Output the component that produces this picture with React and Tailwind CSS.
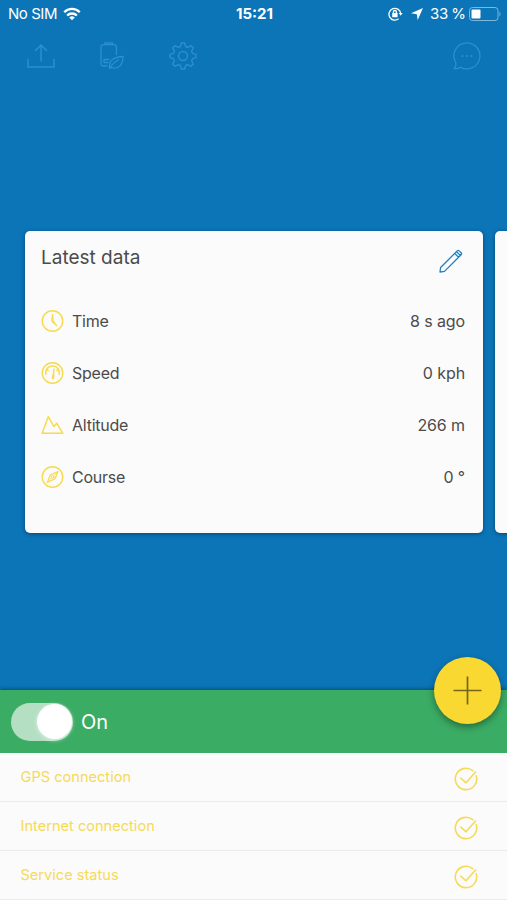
const line = { fill: "none", stroke: "currentColor", strokeLinecap: "round", strokeLinejoin: "round" };

function WifiIcon() {
  return (
    <svg className="ml-[6px] h-[14px] w-[18px]" viewBox="0 0 18 14" fill="none" stroke="white" strokeWidth="2.3">
      <path d="M1.2 5.2a11 11 0 0 1 15.6 0" />
      <path d="M4.1 8.5a7 7 0 0 1 9.8 0" />
      <path d="M9 13.2 6.2 10.5a4 4 0 0 1 5.6 0Z" fill="white" stroke="none" />
    </svg>
  );
}

function LockIcon() {
  return (
    <svg className="h-[14px] w-[15px]" viewBox="0 0 15 14" fill="none" stroke="white" strokeWidth="1.3">
      <path d="M10.6 11.8A5.9 5.9 0 1 1 12.7 6.3" />
      <path d="M10.8 6h3.8l-1.9 2.8Z" fill="white" stroke="none" />
      <rect x="4.2" y="6" width="5.4" height="4.2" rx=".4" fill="white" stroke="none" />
      <path d="M5.4 6.500V5a1.500 1.500 0 0 1 3 0v1.500" />
    </svg>
  );
}

function UploadIcon() {
  return (
    <svg className="h-7 w-7" viewBox="0 0 28 28" {...line} strokeWidth="1.500">
      <path d="M14 19V3M8.500 8.500 14 3l5.500 5.500M1 17.500V25h26v-7.500" />
    </svg>
  );
}

function EcoBatteryIcon() {
  return (
    <svg className="h-7 w-7" viewBox="0 0 28 28" {...line} strokeWidth="1.300">
      <path d="M9 24H5.500Q3 24 3 21.500V5Q3 2.700 5.500 2.700H16Q18.500 2.700 18.500 5V12.500M7 2.500V1h7.500v1.500M6 17.500h5M6 20.500h4M6 17.500v3" />
      <path d="M11.500 26.500C10.500 18 16 15 25 14.500C25 23 20 28 13.500 25.500ZM11.500 26.500Q15 20.500 20.500 18" />
    </svg>
  );
}

function GearIcon() {
  return (
    <svg className="h-7 w-7" viewBox="0 0 28 28" {...line} strokeWidth="1.400">
      <path d="M12.400 1h3.200l1.100 3.500 2 .9 3.300-1.700 2.300 2.300-1.700 3.300.9 2 3.500 1.100v3.200l-3.500 1.100-.9 2 1.700 3.300-2.300 2.300-3.300-1.700-2 .9-1.100 3.500h-3.200l-1.100-3.500-2-.9L6 24.300 3.700 22l1.700-3.300-.9-2L1 15.600v-3.200l3.500-1.100.9-2L3.700 6 6 3.700l3.300 1.700 2-.9Z" />
      <circle cx="14" cy="14" r="4.500" />
    </svg>
  );
}

function ChatIcon() {
  return (
    <svg className="h-7 w-7" viewBox="0 0 28 28" {...line} strokeWidth="1.300">
      <path d="M2.700 20.500A13 13 0 1 1 7.500 25.200Q5 27.200 1.200 26.700Q3.500 24 2.700 20.500Z" />
      <g fill="currentColor" stroke="none"><circle cx="9.500" cy="14" r="1.100" /><circle cx="14" cy="14" r="1.100" /><circle cx="18.500" cy="14" r="1.100" /></g>
    </svg>
  );
}

function PencilIcon() {
  return (
    <svg className="mb-[4px] h-6 w-6 text-[#2181c4]" viewBox="0 0 24 24" {...line} strokeWidth="1.300">
      <path d="M1 23 1.600 18.500 18.200 1.900q1-1 2 0l1.900 1.900q1 1 0 2L5.500 22.400ZM15.700 4.400l3.900 3.900M17.500 2.600l3.900 3.900" />
    </svg>
  );
}

const ring = <circle cx="12" cy="12" r="10.700" />;
const glyphs = {
  Time: <>{ring}<path d="M12 5.500V12.500L16.200 16.700" /><path d="M12 8v4l2 2" strokeWidth="2" /></>,
  Speed: <>{ring}<path d="M5 13.500A7.200 7.200 0 1 1 19 13.500M13.500 8 12.700 17" /><path d="M12.800 14.500l-.2 3" strokeWidth="2.400" /><path d="M6.500 8.500l1 1M17.500 8.500l-1 1" /></>,
  Altitude: <path d="M1.200 20.700 7.600 3.300 13.400 13.600 16.500 10.200 22.800 20.700Z" />,
  Course: <>{ring}<path d="M17.700 6.200 14.600 13.800 6.600 17.600 9.600 10Z" strokeWidth="1.200" /><path d="M17.700 6.200 13 11M11 13 6.600 17.600" strokeWidth=".9" /><circle cx="12" cy="12" r="1.500" strokeWidth="1" /></>,
};

const data = [["Time", "8 s ago"], ["Speed", "0 kph"], ["Altitude", "266 m"], ["Course", "0 °"]];
const statuses = ["GPS connection", "Internet connection", "Service status"];

export default function App() {
  return (
    <div className="flex h-[900px] w-[507px] flex-col overflow-hidden bg-[#0c75b7] font-['Inter','Liberation_Sans',sans-serif]">
      <header className="grid h-7 shrink-0 grid-cols-[1fr_auto_1fr] items-center pl-[8px] pr-[5px] text-[15px] text-white">
        <div className="flex items-center"><span className="tracking-[-0.45px]">No SIM</span><WifiIcon /></div>
        <span className="pr-px text-[15px] font-bold">15:21</span>
        <div className="flex items-center justify-end">
          <LockIcon />
          <svg className="ml-[8px] h-3 w-3" viewBox="0 0 12 12"><path d="M12 0 6.700 12 5.800 6.200 0 5.300Z" fill="white" /></svg>
          <span className="ml-[7px] whitespace-pre tracking-[-0.1px] [word-spacing:-1px]">33 %</span>
          <svg className="ml-[3px] h-[14px] w-[33px]" viewBox="0 0 33 14">
            <rect x=".5" y=".5" width="28.500" height="13" rx="3" fill="none" stroke="#7db7dd" />
            <rect x="2.500" y="2.500" width="9" height="9" rx="1" fill="white" />
            <path d="M30.500 4.500q2 2.500 0 5Z" fill="#7db7dd" />
          </svg>
        </div>
      </header>

      <nav className="flex h-14 shrink-0 items-center pl-[27px] pr-[26px] text-[#2b8fd2]">
        <UploadIcon />
        <div className="ml-[43px] h-7"><EcoBatteryIcon /></div>
        <div className="ml-[43px] h-7"><GearIcon /></div>
        <div className="ml-auto h-7"><ChatIcon /></div>
      </nav>

      <main className="flex min-h-0 flex-1 items-start gap-3 pl-[25px] pt-[147px]">
        <section className="h-[302px] w-[458px] shrink-0 rounded-[5px] bg-[#fbfbfb] px-4 text-[#4b4b4b] shadow-[0_1px_4px_rgba(0,0,0,0.4)]">
          <div className="flex h-[64px] items-center justify-between pr-[4px]">
            <h1 className="pb-[9px] text-[19px]">Latest data</h1>
            <PencilIcon />
          </div>
          {data.map(([label, value]) => (
            <div key={label} className="flex h-[52px] items-center text-base">
              <svg className="h-6 w-[23px] text-[#f8da4c]" viewBox="0 0 24 24" {...line} strokeWidth="1.500">{glyphs[label]}</svg>
              <span className="ml-[8px] pb-px tracking-[-0.25px]">{label}</span>
              <span className="ml-auto pb-px pr-[2px] tracking-[-0.1px]">{value}</span>
            </div>
          ))}
        </section>
        <section className="h-[302px] w-[458px] shrink-0 rounded-[5px] bg-[#fbfbfb] shadow-[0_1px_4px_rgba(0,0,0,0.4)]" />
      </main>

      <footer className="relative shrink-0 bg-[#fbfbfb] shadow-[0_-1px_4px_rgba(0,0,0,0.35)]">
        <div className="flex h-[63px] items-center bg-[#3bac64] pl-[11px]">
          <div className="flex h-[38px] w-[62px] items-center justify-end rounded-full bg-[#b4dfc3] pr-[1px]">
            <span className="size-[35px] rounded-full bg-white shadow-[0_1px_4px_rgba(255,255,255,0.6)]" />
          </div>
          <span className="ml-[8px] text-xl text-white">On</span>
        </div>
        <button aria-label="Add" className="absolute right-[6px] top-[-33px] flex size-[67px] items-center justify-center rounded-full bg-[#f9d832] text-[#746519] shadow-[0_3px_7px_rgba(0,0,0,0.38)]">
          <svg className="size-[29px]" viewBox="0 0 29 29" stroke="currentColor" strokeWidth="1.700"><path d="M14.500.5v28M.5 14.500h28" /></svg>
        </button>
        {statuses.map((status) => (
          <div key={status} className="flex h-[49px] items-center justify-between border-b border-[#ebebeb] pl-[20.500px] pr-[29px] text-[14.600px] text-[#f5da58]">
            <span className="pt-px">{status}</span>
            <svg className="mt-[3px] size-6" viewBox="0 0 24 24" {...line} strokeWidth="1.600">
              <path d="M18.800 3.700A10.700 10.700 0 1 0 22.200 8.700M6.700 11 12 15.800 21.500 5" />
            </svg>
          </div>
        ))}
      </footer>
    </div>
  );
}
